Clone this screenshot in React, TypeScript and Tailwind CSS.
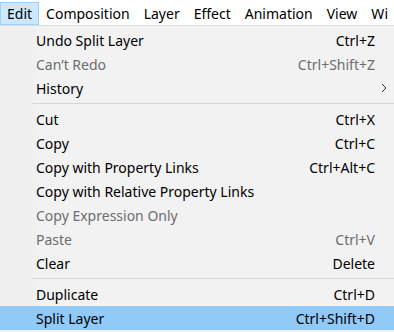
import React from "react";

type Item =
  | { sep: true }
  | { label: string; shortcut?: string; disabled?: boolean; sub?: boolean; active?: boolean };

const items: Item[] = [
  { label: "Undo Split Layer", shortcut: "Ctrl+Z" },
  { label: "Can\u2019t Redo", shortcut: "Ctrl+Shift+Z", disabled: true },
  { label: "History", sub: true },
  { sep: true },
  { label: "Cut", shortcut: "Ctrl+X" },
  { label: "Copy", shortcut: "Ctrl+C" },
  { label: "Copy with Property Links", shortcut: "Ctrl+Alt+C" },
  { label: "Copy with Relative Property Links" },
  { label: "Copy Expression Only", disabled: true },
  { label: "Paste", shortcut: "Ctrl+V", disabled: true },
  { label: "Clear", shortcut: "Delete" },
  { sep: true },
  { label: "Duplicate", shortcut: "Ctrl+D" },
  { label: "Split Layer", shortcut: "Ctrl+Shift+D", active: true },
];

const bar = ["Edit", "Composition", "Layer", "Effect", "Animation", "View", "Wi"];

export default function App() {
  return (
    <div
      className="w-[394px] h-[332px] overflow-hidden bg-white text-black"
      style={{ fontFamily: '"Noto Sans", "Open Sans", sans-serif' }}
    >
      <div className="h-[26px] flex items-end border-b border-[#dadada] whitespace-nowrap text-[14px] leading-[23px]">
        {bar.map((b, i) => (
          <div
            key={b}
            className={
              i === 0
                ? "h-[23px] px-[6px] bg-[#cce8ff] border border-[#99d1ff] leading-[21px]"
                : "h-[23px] px-[7px]"
            }
          >
            {b}
          </div>
        ))}
      </div>
      <div className="flex bg-[#f2f2f2] h-[306px] pt-[2px] text-[14px]">
        <div className="flex flex-col w-full">
          {items.map((it, i) =>
            "sep" in it ? (
              <div key={i} className="h-[7px] flex items-center">
                <div className="w-[32px] h-full bg-[#f0f0f0]" />
                <div className="flex-1 h-px bg-[#d7d7d7]" />
              </div>
            ) : (
              <div
                key={i}
                className={
                  "h-[24px] flex items-center whitespace-nowrap " +
                  (it.active ? "bg-[#91c9f7]" : "")
                }
              >
                <div className={"w-[36px] h-full shrink-0 " + (it.active ? "" : "bg-[#f0f0f0]")} />
                <div className={"flex-1 " + (it.disabled ? "text-[#6d6d6d]" : "")}>{it.label}</div>
                {it.sub ? (
                  <svg width="6" height="10" viewBox="0 0 6 10" className="mr-[7px]">
                    <path d="M1 1 L5 5 L1 9" fill="none" stroke="#333" strokeWidth="1" />
                  </svg>
                ) : (
                  <div className={"pr-[19px] " + (it.disabled ? "text-[#6d6d6d]" : "")}>
                    {it.shortcut}
                  </div>
                )}
              </div>
            )
          )}
        </div>
      </div>
    </div>
  );
}
